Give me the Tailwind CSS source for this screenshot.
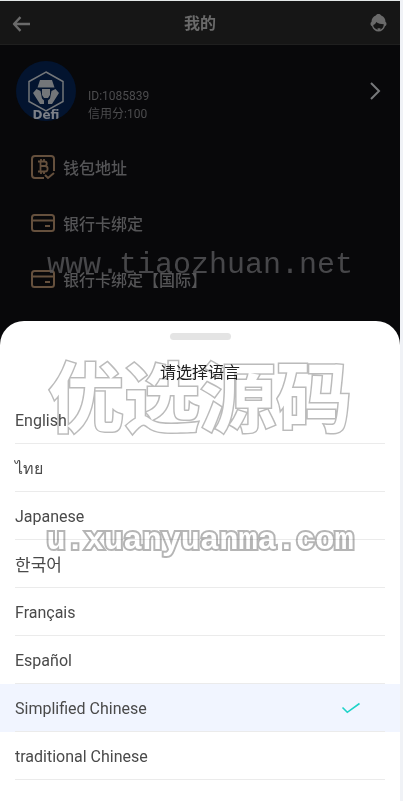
<!DOCTYPE html>
<html lang="zh-CN">
<head>
    <meta charset="UTF-8">
    <meta name="viewport" content="width=device-width, initial-scale=1.0">
    <title>我的</title>
    <script src="https://cdn.jsdelivr.net/npm/@tailwindcss/browser@4"></script>
</head>
<body class="bg-[#f0f2f6] font-['Roboto','Noto_Sans_CJK_SC',sans-serif]">
    <div class="relative min-h-screen mr-[3px] border-t border-[#e4e8e8] bg-[#08080a] overflow-hidden">

        <!-- top bar -->
        <header class="flex h-11 items-center justify-between border-b border-[#1f1f1f] bg-[#161616] px-3 pt-0.5 text-[#6a6a6a]">
            <button type="button" aria-label="返回" class="w-5">
                <svg class="h-5 w-5" viewBox="0 0 20 20" fill="none" stroke="currentColor" stroke-width="2.4" stroke-linejoin="round">
                    <path d="M18 10H2M8.500 3.200L2 10l6.500 6.800"/>
                </svg>
            </button>
            <h1 class="text-base font-bold">我的</h1>
            <button type="button" aria-label="客服" class="w-5">
                <svg class="h-5 w-5" viewBox="0 0 20 20" fill="currentColor">
                    <path d="M10.500 0c1.500 0 2.300.6 2.700 1.500 2.800 1 4.300 3.500 4.300 6.500.8.400 1 1.200 1 2s-.4 1.800-1.500 2.200c-1 3.200-3.400 5.300-6.500 5.300s-5.500-2.100-6.500-5.300c-1.100-.4-1.500-1.400-1.500-2.200s.2-1.600 1-2c0-3 1.500-5.500 4.300-6.500.4-.9 1.200-1.500 2.700-1.500z"/>
                    <path fill="#161616" d="M8.200 8c2 1.800 4.700 2 7.600 2.300 0 2.500-1.500 4.700-3.600 5.400l.3-1.500h-3l.3 1.600C7.200 15.200 5.300 13.300 5.200 11c1.500-.3 2.600-1.500 3-3z"/>
                </svg>
            </button>
        </header>

        <!-- profile -->
        <a href="#" class="flex items-center px-4 pt-4 text-[#4c4c4e]">
            <svg class="h-[60px] w-[60px] rounded-full" viewBox="0 0 60 60">
                <rect width="60" height="60" fill="#03142f"/>
                <path d="M30 11l17 9.500v20L30 50l-17-9.500v-20z" fill="none" stroke="#737679" stroke-width="1.500"/>
                <path fill="#737679" d="M24 19h12l2.500 7.500h-17zM26 28h8v6l-2 3h-4l-2-3zM20.500 28l4 2 1.500 7.500 2 2V43h-4l-7-11zM39.500 28l-4 2-1.500 7.500-2 2V43h4l7-11z"/>
                <text x="30" y="58" text-anchor="middle" font-family="DejaVu Sans" font-weight="bold" font-size="12" fill="#7c8088">Defi</text>
            </svg>
            <div class="ml-3 h-[60px] flex-1 pt-[26px] text-xs leading-[18px]">
                <p>ID:1085839</p>
                <p>信用分:100</p>
            </div>
            <svg class="h-5 w-5" viewBox="0 0 20 20" fill="none" stroke="#77797b" stroke-width="2">
                <path d="M7 2l8 8-8 8"/>
            </svg>
        </a>

        <!-- menu -->
        <nav class="px-[30px] pt-[18px] text-base font-medium text-[#555557]">
            <a href="#" class="flex h-14 items-center gap-[7px]">
                <svg class="h-[26px] w-[26px]" viewBox="0 0 26 26" fill="none" stroke="#65503d" stroke-width="2">
                    <path d="M14 24H5a3 3 0 0 1-3-3V5a3 3 0 0 1 3-3h16a3 3 0 0 1 3 3v12M15 21l3 3 6-5"/>
                    <path stroke-width="1.800" d="M8 7.500h6.500c3 0 3 4.500 0 4.500H11h4c3.500 0 3.500 5.500 0 5.500H8M10.500 7.500v10M11 5v2.500M14 5v2.500M11 17.500V20M14 17.500V20"/>
                </svg>
                <span class="pt-[3px]">钱包地址</span>
            </a>
            <a href="#" class="flex h-14 items-center gap-[7px]">
                <svg class="h-[26px] w-[26px]" viewBox="0 0 26 26" fill="none" stroke="#65503d" stroke-width="2">
                    <rect x="2" y="5" width="22" height="16" rx="2.500"/>
                    <path d="M2 10.500h22M15 16h5"/>
                </svg>
                <span class="pt-[3px]">银行卡绑定</span>
            </a>
            <a href="#" class="flex h-14 items-center gap-[7px]">
                <svg class="h-[26px] w-[26px]" viewBox="0 0 26 26" fill="none" stroke="#65503d" stroke-width="2">
                    <rect x="2" y="5" width="22" height="16" rx="2.500"/>
                    <path d="M2 10.500h22M15 16h5"/>
                </svg>
                <span class="pt-[3px]">银行卡绑定【国际】</span>
            </a>
        </nav>

        <!-- language sheet -->
        <section class="absolute inset-x-0 bottom-0 rounded-t-3xl bg-white pt-3 pb-[21px] text-base text-[#4a4a4a]">
            <div class="mx-auto h-[7px] w-[61px] rounded-full bg-[#e4e4e4]"></div>
            <h2 class="mt-5 mb-3 pt-0.5 text-center leading-[22px] text-[#222]">请选择语言</h2>
            <ul>
                <li><button type="button" class="block w-full px-[15px] text-left"><span class="flex h-12 items-center border-b border-[#ebebeb] pt-0.5">English</span></button></li>
                <li><button type="button" class="block w-full px-[15px] text-left"><span class="flex h-12 items-center border-b border-[#ebebeb] pt-0.5">ไทย</span></button></li>
                <li><button type="button" class="block w-full px-[15px] text-left"><span class="flex h-12 items-center border-b border-[#ebebeb] pt-0.5">Japanese</span></button></li>
                <li><button type="button" class="block w-full px-[15px] text-left"><span class="flex h-12 items-center border-b border-[#ebebeb] text-[17px] font-['Noto_Sans_CJK_KR',sans-serif]">한국어</span></button></li>
                <li><button type="button" class="block w-full px-[15px] text-left"><span class="flex h-12 items-center border-b border-[#ebebeb] pt-0.5">Français</span></button></li>
                <li><button type="button" class="block w-full px-[15px] text-left"><span class="flex h-12 items-center border-b border-[#ebebeb] pt-0.5">Español</span></button></li>
                <li class="bg-[#f1f5ff]">
                    <button type="button" class="block w-full px-[15px] text-left">
                        <span class="flex h-12 items-center justify-between border-b border-[#ebebeb] pt-0.5 pr-6">
                            Simplified Chinese
                            <svg class="h-5 w-5" viewBox="0 0 20 20" fill="none" stroke="#1dd3c8" stroke-width="1.600">
                                <path d="M1.500 8.500l4.800 4.800L18.500 4.500"/>
                            </svg>
                        </span>
                    </button>
                </li>
                <li><button type="button" class="block w-full px-[15px] text-left"><span class="flex h-12 items-center border-b border-[#ebebeb] pt-0.5">traditional Chinese</span></button></li>
            </ul>
        </section>

        <!-- watermark -->
        <p class="pointer-events-none absolute inset-x-0 bottom-[512px] text-center font-['Liberation_Mono',monospace] text-[30px] leading-[48px] whitespace-nowrap text-[#58585a]/80">www.tiaozhuan.net</p>
        <p class="pointer-events-none absolute inset-x-0 bottom-[360px] text-center font-['Noto_Sans_CJK_SC',sans-serif] text-[76px] leading-[96px] font-bold whitespace-nowrap text-white mix-blend-multiply [-webkit-text-stroke:3px_#bbb] [paint-order:stroke_fill]">优选源码</p>
        <p class="pointer-events-none absolute inset-x-0 bottom-[236px] text-center font-['Liberation_Mono',monospace] text-[32px] leading-[48px] font-bold whitespace-nowrap text-white mix-blend-multiply [-webkit-text-stroke:4px_#b5b5b5] [paint-order:stroke_fill]">u.xuanyuanma.com</p>
    </div>
</body>
</html>
